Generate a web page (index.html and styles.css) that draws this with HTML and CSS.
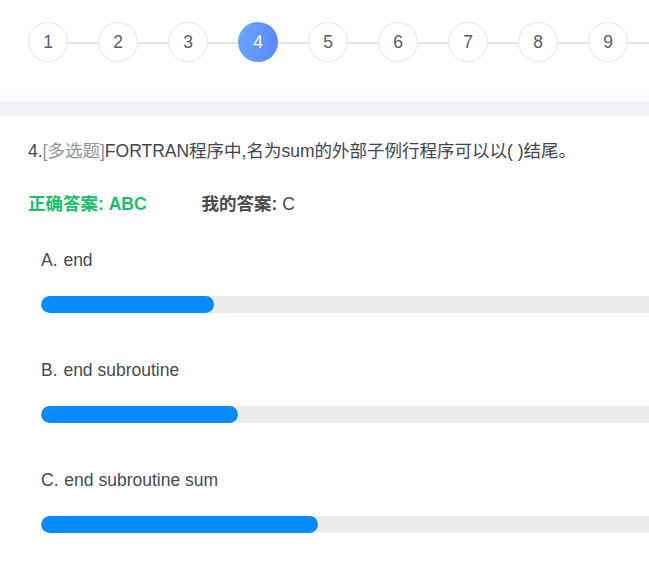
FILE: index.html
```html
<!DOCTYPE html>
<html lang="zh-CN">
<head>
<meta charset="utf-8">
<title>答题结果</title>
<link rel="stylesheet" href="styles.css">
</head>
<body>
<header class="steps-header">
  <div class="steps">
    <span class="step">1</span><span class="link"></span>
    <span class="step">2</span><span class="link"></span>
    <span class="step">3</span><span class="link"></span>
    <span class="step step-active">4</span><span class="link"></span>
    <span class="step">5</span><span class="link"></span>
    <span class="step">6</span><span class="link"></span>
    <span class="step">7</span><span class="link"></span>
    <span class="step">8</span><span class="link"></span>
    <span class="step">9</span><span class="link"></span>
  </div>
</header>
<div class="divider"></div>
<main class="content">
  <p class="question">4.<span class="qtype">[多选题]</span>FORTRAN程序中,名为sum的外部子例行程序可以以( )结尾。</p>
  <div class="answers">
    <span class="correct">正确答案: ABC</span>
    <span class="mine"><b>我的答案:</b> C</span>
  </div>
  <div class="option">
    <div class="opt-label"><span class="opt-key">A.</span> end</div>
    <div class="track"><div class="fill" style="width:173px"></div></div>
  </div>
  <div class="option">
    <div class="opt-label"><span class="opt-key">B.</span> end subroutine</div>
    <div class="track"><div class="fill" style="width:197px"></div></div>
  </div>
  <div class="option">
    <div class="opt-label"><span class="opt-key">C.</span> end subroutine sum</div>
    <div class="track"><div class="fill" style="width:277px"></div></div>
  </div>
</main>
</body>
</html>
```

FILE: styles.css
```css
html, body {
  margin: 0;
  padding: 0;
  background: #fff;
  overflow: hidden;
}
body {
  font-family: "Liberation Sans", Arial, "Noto Sans CJK SC", sans-serif;
  color: #464646;
}
.steps-header {
  height: 102px;
  background: linear-gradient(#fff 0, #fff 88px, #f9f9fa 102px);
  overflow: hidden;
}
.steps {
  display: flex;
  align-items: center;
  padding: 22px 0 0 28px;
  white-space: nowrap;
}
.step {
  flex: none;
  width: 40px;
  height: 40px;
  box-sizing: border-box;
  border: 1px solid #e6e6e6;
  border-radius: 50%;
  display: flex;
  align-items: center;
  justify-content: center;
  font-size: 17.5px;
  color: #5a5e66;
  background: #fff;
}
.step-active {
  border: none;
  color: #fff;
  background: linear-gradient(100deg, #6aa8ff 0%, #5a86ff 100%);
}
.link {
  flex: none;
  width: 30px;
  height: 2px;
  margin-top: 2px;
  background: #e6e6e6;
}
.divider {
  height: 14px;
  background: #f1f2f5;
}
.content {
  padding: 23px 0 0 28px;
}
.question {
  margin: 0;
  font-size: 17.5px;
  line-height: 24px;
  color: #424550;
}
.qtype {
  color: #8f939c;
}
.answers {
  margin-top: 29px;
  font-size: 17.5px;
  line-height: 24px;
  white-space: nowrap;
}
.correct {
  font-weight: bold;
  color: #19be6b;
  margin-right: 50px;
}
.mine {
  color: #4a4a4a;
}
.mine b {
  font-weight: bold;
}
.option {
  padding-left: 13px;
  margin-top: 32px;
}
.option + .option {
  margin-top: 45px;
}
.opt-label {
  font-size: 17.5px;
  line-height: 24px;
  color: #474a52;
}
.opt-key {
  margin-right: 1px;
}
.track {
  margin-top: 24px;
  width: 720px;
  height: 17px;
  border-radius: 9px;
  background: #ebebeb;
  overflow: hidden;
}
.fill {
  height: 100%;
  border-radius: 9px;
  background: #068bff;
}
```
